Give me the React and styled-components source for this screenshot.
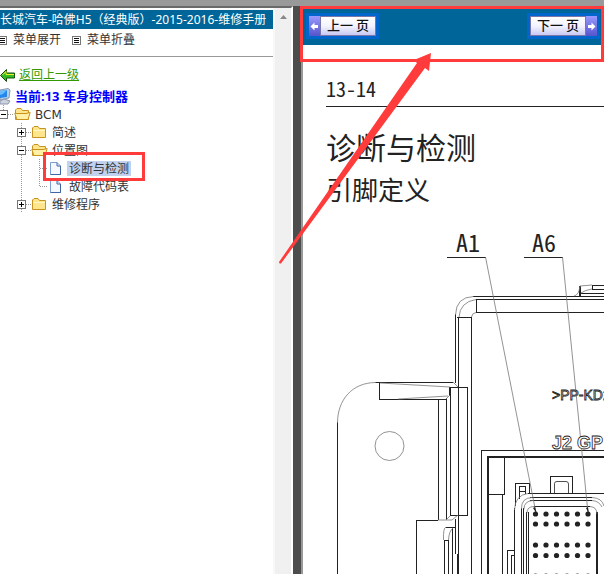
import React from 'react';
import styled, { createGlobalStyle, css } from 'styled-components';

const GlobalStyle = createGlobalStyle`
  * { box-sizing: border-box; }
  body { margin: 0; background: #fff; font: 12px/18px "DejaVu Sans", "Noto Sans CJK SC", sans-serif; color: #333; }
  button { font: inherit; color: inherit; cursor: pointer; }
`;
const Page = styled.div`
  position: relative;
  display: flex;
  flex-direction: column;
  height: 100vh;
  overflow: hidden;
`;
const TopStrip = styled.div`
  flex: none;
  height: 6px;
  background: #999;
`;
const Frames = styled.div`
  flex: 1;
  min-height: 0;
  display: grid;
  grid-template-columns: 293px 10px minmax(0, 1fr);
`;
const Sidebar = styled.aside`
  display: grid;
  grid-template-columns: minmax(0, 1fr) 18px;
  border-top: 2px solid #696969;
  border-right: 2px solid #fff;
`;
const SideContent = styled.div`
  padding-top: 2px;
  overflow: hidden;
`;
const Title = styled.h1`
  margin: 0;
  height: 19px;
  background: #069;
  color: #fff;
  font: 400 12px/19px "Noto Sans", "Noto Sans CJK SC", sans-serif;
  white-space: nowrap;
`;
const MenuBar = styled.div`
  display: flex;
  gap: 11px;
  height: 28px;
  padding-top: 1px;
  border-bottom: 1px solid #999;
`;
const MenuButton = styled.button`
  display: flex;
  align-items: center;
  gap: 5px;
  height: 20px;
  padding: 0;
  border: 0;
  background: none;
`;
const Nav = styled.nav`
  padding-top: 8px;
`;
const BackLink = styled.a`
  display: flex;
  align-items: center;
  gap: 3px;
  height: 20px;
  color: #390;
`;
const Current = styled.div`
  display: flex;
  align-items: center;
  gap: 3px;
  height: 20px;
  padding-top: 2px;
  color: #00f;
  font: 700 13px/18px "Noto Sans", "Noto Sans CJK SC", sans-serif;
  white-space: nowrap;
`;
const Tree = styled.ul`
  list-style: none;
  margin: 0;
  padding: 0 0 0 ${p => (p.$nested ? '17px' : '0')};
`;
const Row = styled.div`
  display: flex;
  align-items: center;
  height: 18px;
`;
const Toggle = styled.button`
  display: flex;
  padding: 0;
  border: 0;
  background: none;
`;
const Item = styled.a`
  margin-left: 2px;
  padding: 1px 2px 0;
  line-height: 14px;
  color: #333;
  text-decoration: none;
  white-space: nowrap;
  ${p => p.$selected && css`background: #c1d2ee;`}
`;
const ScrollTrack = styled.div`
  display: flex;
  justify-content: center;
  padding-top: 7px;
  border-left: 2px solid #f8f8f8;
  background: #f0f0f0;
`;
const Divider = styled.div`
  background: #4d4d4d;
  border-right: 2px solid #999;
`;
const Main = styled.main`
  min-width: 0;
  overflow: hidden;
`;
const Pager = styled.header`
  display: flex;
  justify-content: space-between;
  padding: 7px 4px 6px 3px;
  background: #069;
`;
const PageButton = styled.button`
  display: flex;
  align-items: stretch;
  flex-direction: ${p => (p.$next ? 'row-reverse' : 'row')};
  width: 73px;
  height: 26px;
  padding: 0;
  border: 3px solid #06c;
  background: #06c;
  color: #111;
`;
const PageLabel = styled.span`
  flex: 1;
  border: 1px solid #77a;
  background: linear-gradient(#fff, #f4f4ff 50%, #c8c8f4);
  font: 500 13px/16px "Noto Sans CJK SC", sans-serif;
  white-space: nowrap;
`;
const PageArrow = styled.span`
  display: flex;
  align-items: center;
  justify-content: center;
  width: 11px;
  background: linear-gradient(#99f, #55c);
`;
const Article = styled.article`
  padding: 33px 0 0 23px;
  color: #222;
  font-family: "Noto Sans CJK SC", sans-serif;
`;
const PageNumber = styled.div`
  height: 29px;
  border-bottom: 1px solid #222;
  font: 20px/22px "Noto Sans Mono CJK SC", "Noto Sans CJK SC", sans-serif;
`;
const Heading = styled.h2`
  margin: 0;
  padding-top: 18px;
  font-size: 30px;
  line-height: 42px;
  font-weight: 400;
`;
const SubHeading = styled.h3`
  margin: 0;
  font-size: 26px;
  line-height: 44px;
  font-weight: 400;
`;
const Diagram = styled.svg`
  display: block;
  width: 278px;
  height: 360px;
  margin-top: 9px;
`;
const HeaderMark = styled.div`
  position: absolute;
  top: 6px;
  left: 300px;
  right: 0;
  height: 56px;
  border: 3px solid #ff3b3b;
  pointer-events: none;
`;
const ItemMark = styled.div`
  position: absolute;
  top: 152px;
  left: 43px;
  width: 102px;
  height: 29px;
  border: 3px solid #ff3b3b;
  pointer-events: none;
`;
const ArrowMark = styled.svg`
  position: absolute;
  top: 50px;
  left: 276px;
  width: 160px;
  height: 216px;
  pointer-events: none;
`;
const Glyph = styled.svg`
  display: block;
  flex: none;
`;

const ListIcon = ({ cropped }) => (
  <Glyph width={cropped ? 8 : 10} height="9" viewBox={cropped ? '2 0 8 9' : '0 0 10 9'} shapeRendering="crispEdges">
    <path d="M.5 .5H8.500V8.500H.5Z" fill="#fff" stroke="#777" />
    <path d="M2 2.500H7M2 4.500H7M2 6.500H7" stroke="#111" />
  </Glyph>
);
const BackIcon = () => (
  <Glyph width="16" height="14" viewBox="0 0 16 14">
    <path d="M.5 7.500 6.500 1.500V5H14.500v5H6.500v3.500Z" fill="#3b2" stroke="#164f0c" />
    <path d="M2.500 7 6 3.500V6.500H14" fill="none" stroke="#ee3" />
  </Glyph>
);
const ComputerIcon = () => (
  <Glyph width="12" height="17" viewBox="0 0 12 17">
    <path d="M0 2 8 .5 10 2 9 10 0 12Z" fill="#b9d0e8" stroke="#8899b0" />
    <path d="M0 3 7 2 7 9 0 10Z" fill="#2387ee" />
    <path d="M0 3 7 2 3 6 0 7Z" fill="#69bdff" />
    <path d="M0 13 4 11 10 13 8 16 0 16Z" fill="#ccd3df" stroke="#8b95a8" />
  </Glyph>
);
const Expander = ({ open, root }) => (
  <Glyph width="14" height="18" viewBox={root ? '0 0 14 18' : '-1 0 14 18'} shapeRendering="crispEdges">
    <path d={root ? 'M3.500 0V9M8 9.500H14' : 'M3.500 0V18M8 9.500H14'} stroke="#999" strokeDasharray="1 1" />
    <path d="M-.5 5.500H7.500V13.500H-.5Z" fill="#fff" stroke="#777" />
    <path d={open ? 'M1 9.500H6' : 'M1 9.500H6M3.500 7V12'} stroke="#000" />
  </Glyph>
);
const Branch = ({ last }) => (
  <Glyph width="31" height="18" viewBox="-1 0 31 18" shapeRendering="crispEdges">
    <path d={`M21.500 0V${last ? 9 : 18}M22 9.500H30`} stroke="#999" strokeDasharray="1 1" />
    <path d="M3.500 0V18" stroke="#999" strokeDasharray="1 1" />
  </Glyph>
);
const Folder = ({ open }) => (
  <Glyph width="17" height="16" viewBox="0 0 17 16">
    <path d="M1.500 13.500V4L3 2.500H7L8.500 4.500H14.500V13.500Z" fill="#ffe58b" stroke="#c8921f" />
    {open ? (
      <path d="M.8 7.500H12L16.200 6.500 14 13.500H3Z" fill="#fff0a5" stroke="#c8921f" />
    ) : (
      <path d="M2.500 6.500H14" stroke="#fff7c6" />
    )}
  </Glyph>
);
const FileIcon = () => (
  <Glyph width="17" height="16" viewBox="0 0 17 16">
    <path d="M2.500 2.500H9L12.500 6V14.500H2.500Z" fill="#f5f9ff" stroke="#7d9ed2" />
    <path d="M9 2.500V6H12.500V14.500H2.500" fill="none" stroke="#3f65a5" />
  </Glyph>
);
const SmallArrow = ({ next }) => (
  <Glyph width="9" height="9" viewBox="0 0 9 9">
    <path d={next ? 'M8.500 4.500 4.500 .5V3H1v3h3.500v2.500Z' : 'M.5 4.500 4.500 .5V3H8v3H4.500v2.500Z'} fill="#fff" />
  </Glyph>
);

const Folded = ({ label, open, root, children }) => (
  <li>
    <Row>
      <Toggle aria-label={label}><Expander open={open} root={root} /></Toggle>
      <Folder open={open} />
      <Item href="#">{label}</Item>
    </Row>
    {children}
  </li>
);
const Leaf = ({ label, selected, last }) => (
  <li>
    <Row>
      <Branch last={last} />
      <FileIcon />
      <Item href="#" $selected={selected}>{label}</Item>
    </Row>
  </li>
);

const pinColumns = [535.5, 546, 556.5, 567, 577.5, 588];
const pinRows = [514, 524, 545, 555.5, 576];

const ModuleDrawing = () => (
  <Diagram viewBox="326 220 278 360" role="img" aria-label="BCM" fill="none" stroke="#222">
    <g shapeRendering="crispEdges">
      <path d="M447 257.500H486M524 257.500H563" />
      <path d="M473 296.500H604M477 299.500H604M476 312.500H604M476.500 299V312M457 317.500H472" />
      <path d="M455.500 314V383M458.500 317V574M471.500 317V580" />
      <path d="M580.500 286V296M579.500 286V296M580 293.500H604M604 285.500H592.500V289.500H604" />
      <path d="M375 382.500H453M337.500 422V580M379.500 383V399.500H446M438.500 399V520M446.500 398V520M450.500 387V516M449.500 387V396M450 387.500H467.500V515.500H450M416.500 580V520.500H438" />
      <path d="M455.500 519V554M444.500 540V580M448.500 540V580M452.500 528V580M457.500 554V580M444 540.500H448M446 527.500H456" />
      <path d="M604 450.500H481.500V580M488.500 494.500H504.500V457M502.500 494V580" />
      <path d="M604 457H488V580" strokeWidth="2" />
      <path d="M515.500 506V483.500H529.500V493M519.500 499V486.500H525.500V494M519.500 491.500H525" />
      <path d="M550.500 493V476.500H572.500V493M507.500 580V550.500H514M511.500 580V555.500H514" />
      <path d="M528 493.500H604M530 497.500H592M530 500.500H592M534 506.500H590M514.500 508V580M521.500 508V580M523.500 508V580M526.500 512V580M528.500 512V580M596.500 512V580M597.500 512V580" />
    </g>
    <g stroke="#777" strokeWidth=".8">
      <path d="M485.500 257 536 513M562.500 257 588 513" />
      <path d="M455.500 315Q456 297 473.500 296.500M459 317Q460 302 476 299.500M471.500 317Q472 313 476 312.500" />
      <path d="M574 296Q579 295 580 286L592 285M581 293Q585 290 592 289" />
      <path d="M337.500 423C337.500 400 352 382.500 376 382.500" />
      <circle cx="389.500" cy="446" r="14.500" />
      <path d="M380 383 450 387M398 399 448 396M446 399 450 395M453 382 458 387M438 520H452L458 515M446 520 450 516M446 527Q443 528 443.500 540M453 528Q449 531 448.500 540" />
      <path d="M514.500 510Q515 495 528 493.500M521.500 509Q521 498 532 497.500M524 509Q524 501 533 500.500M527 513Q527 506.500 534 506.500M590 506.500Q597 507 597 514M592 497.500Q602 498 604 506M592 500.500Q599 501 602 507" />
      <path d="M554.500 493V483.500Q554.500 481.500 557 481.500H566Q568.500 481.500 568.500 484V493" stroke="#222" />
    </g>
    <g fill="#222" stroke="none">
      {pinRows.map(y => pinColumns.map(x => <circle key={`${x}-${y}`} cx={x} cy={y} r="2.600" />))}
      <path d="M533 508 535 507 537 514ZM586 508 588 507 589 514Z" />
    </g>
    <g fill="#222" stroke="none" fontFamily="'Noto Sans Mono CJK SC', 'Noto Sans CJK SC', sans-serif" fontSize="24">
      <text x="456" y="252">A1</text>
      <text x="532" y="252">A6</text>
    </g>
    <g fill="#fff" strokeWidth=".8" fontFamily="'Liberation Sans', sans-serif">
      <text x="552" y="400" fontSize="14">&gt;PP-KD2</text>
      <text x="552" y="449" fontSize="18" fontWeight="700">J2 GP</text>
    </g>
  </Diagram>
);

export default function App() {
  return (
    <Page>
      <GlobalStyle />
      <TopStrip />
      <Frames>
        <Sidebar>
          <SideContent>
            <Title>长城汽车-哈佛H5（经典版）-2015-2016-维修手册</Title>
            <MenuBar>
              <MenuButton><ListIcon cropped />菜单展开</MenuButton>
              <MenuButton><ListIcon />菜单折叠</MenuButton>
            </MenuBar>
            <Nav>
              <BackLink href="#"><BackIcon />返回上一级</BackLink>
              <Current><ComputerIcon />当前:13 车身控制器</Current>
              <Tree>
                <Folded label="BCM" open root>
                  <Tree $nested>
                    <Folded label="简述" />
                    <Folded label="位置图" open>
                      <Tree>
                        <Leaf label="诊断与检测" selected />
                        <Leaf label="故障代码表" last />
                      </Tree>
                    </Folded>
                    <Folded label="维修程序" />
                  </Tree>
                </Folded>
              </Tree>
            </Nav>
          </SideContent>
          <ScrollTrack>
            <Glyph width="7" height="4" viewBox="0 0 7 4"><path d="M0 4 3.500 0 7 4Z" fill="#888" /></Glyph>
          </ScrollTrack>
        </Sidebar>
        <Divider />
        <Main>
          <Pager>
            <PageButton><PageArrow><SmallArrow /></PageArrow><PageLabel>上一 页</PageLabel></PageButton>
            <PageButton $next><PageArrow><SmallArrow next /></PageArrow><PageLabel>下一 页</PageLabel></PageButton>
          </Pager>
          <Article>
            <PageNumber>13-14</PageNumber>
            <Heading>诊断与检测</Heading>
            <SubHeading>引脚定义</SubHeading>
            <ModuleDrawing />
          </Article>
        </Main>
      </Frames>
      <HeaderMark />
      <ItemMark />
      <ArrowMark viewBox="276 50 160 216" aria-hidden="true">
        <path d="M431 53 429 71 425 68 281 263.500Q279 264 279 262L417 63 414 60Z" fill="#ff3b3b" />
      </ArrowMark>
    </Page>
  );
}
